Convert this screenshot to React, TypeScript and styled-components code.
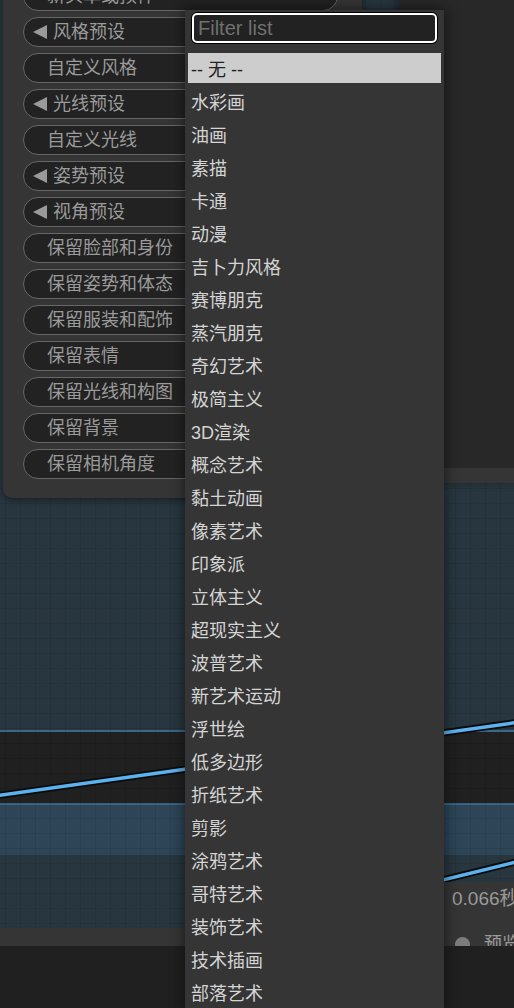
import React from 'react';
import styled, { createGlobalStyle } from 'styled-components';

const GlobalStyle = createGlobalStyle`
  body {
    margin: 0;
    background: #202020;
  }
`;

const pills = [
  { label: '新头单或预件', arrow: false },
  { label: '风格预设', arrow: true },
  { label: '自定义风格', arrow: false },
  { label: '光线预设', arrow: true },
  { label: '自定义光线', arrow: false },
  { label: '姿势预设', arrow: true },
  { label: '视角预设', arrow: true },
  { label: '保留脸部和身份', arrow: false },
  { label: '保留姿势和体态', arrow: false },
  { label: '保留服装和配饰', arrow: false },
  { label: '保留表情', arrow: false },
  { label: '保留光线和构图', arrow: false },
  { label: '保留背景', arrow: false },
  { label: '保留相机角度', arrow: false },
];

const options = [
  '-- 无 --', '水彩画', '油画', '素描', '卡通', '动漫', '吉卜力风格', '赛博朋克', '蒸汽朋克',
  '奇幻艺术', '极简主义', '3D渲染', '概念艺术', '黏土动画', '像素艺术', '印象派', '立体主义',
  '超现实主义', '波普艺术', '新艺术运动', '浮世绘', '低多边形', '折纸艺术', '剪影', '涂鸦艺术',
  '哥特艺术', '装饰艺术', '技术插画', '部落艺术',
];

const App: React.FC = () => (
  <Screen>
    <GlobalStyle />
    <Canvas>
      <GroupBand $top={730} $height={75} $bg='#202020' $edge='#3a678a' />
      <GroupBand $top={805} $height={50} $bg='#2d4557' />
      <GridOverlay />
      <Links width='514' height='928'>
        <line x1='-5' y1='796' x2='520' y2='722' stroke='#0b0b0b' strokeWidth='7' />
        <line x1='-5' y1='796' x2='520' y2='722' stroke='#5cb2ee' strokeWidth='3.5' />
        <line x1='300' y1='915' x2='520' y2='861' stroke='#0b0b0b' strokeWidth='7' />
        <line x1='300' y1='915' x2='520' y2='861' stroke='#5cb2ee' strokeWidth='3.5' />
      </Links>
      <PanelNode>
        {pills.map((p) => (
          <Pill key={p.label} $arrow={p.arrow}>
            {p.arrow && <Arrow />}
            {p.label}
          </Pill>
        ))}
      </PanelNode>
      <SideNode>
        <SideBody />
        <SideFooter />
      </SideNode>
    </Canvas>
    <StatusStrip />
    <BottomPanel />
    <ResultNode>
      <Timing>0.066秒</Timing>
      <PreviewRow>
        <Dot />
        预览
      </PreviewRow>
    </ResultNode>
    <Dropdown>
      <FilterInput placeholder='Filter list' />
      {options.map((o, i) => (
        <Option key={o} $selected={i === 0}>
          {o}
        </Option>
      ))}
    </Dropdown>
  </Screen>
);

const Screen = styled.div`
  position: relative;
  width: 514px;
  height: 1008px;
  overflow: hidden;
  display: flex;
  flex-direction: column;
  font-family: 'Liberation Sans', 'Noto Sans CJK SC', sans-serif;
`;

const Canvas = styled.div`
  position: relative;
  flex: 0 0 928px;
  background: #28363f;
  overflow: hidden;
`;

const GroupBand = styled.div<{ $top: number; $height: number; $bg: string; $edge?: string }>`
  position: absolute;
  left: 0;
  right: 0;
  top: ${(p) => p.$top}px;
  height: ${(p) => p.$height}px;
  box-sizing: border-box;
  background: ${(p) => p.$bg};
  border-top: ${(p) => (p.$edge ? `2px solid ${p.$edge}` : 'none')};
  border-bottom: ${(p) => (p.$edge ? `2px solid ${p.$edge}` : 'none')};
`;

const GridOverlay = styled.div`
  position: absolute;
  inset: 0;
  background-image: linear-gradient(rgba(0, 0, 0, 0.08) 1px, transparent 1px),
    linear-gradient(90deg, rgba(0, 0, 0, 0.08) 1px, transparent 1px);
  background-size: 15px 15px;
  background-position: 5px 8px;
`;

const Links = styled.svg`
  position: absolute;
  left: 0;
  top: 0;
`;

const PanelNode = styled.div`
  position: absolute;
  left: 3px;
  top: -30px;
  width: 359px;
  box-sizing: border-box;
  padding: 11px 0 19px 20px;
  display: flex;
  flex-direction: column;
  gap: 6px;
  background: #353535;
  border-radius: 0 0 9px 9px;
  box-shadow: 0 2px 6px rgba(0, 0, 0, 0.45);
`;

const Pill = styled.div<{ $arrow: boolean }>`
  display: flex;
  align-items: center;
  gap: 6px;
  width: 315px;
  height: 30px;
  box-sizing: border-box;
  padding-left: ${(p) => (p.$arrow ? '9px' : '23px')};
  background: #222;
  border: 1px solid #666;
  border-radius: 15px;
  color: #9a9a9a;
  font-size: 18px;
  line-height: 1;
  white-space: nowrap;
`;

const Arrow = styled.span`
  width: 0;
  height: 0;
  border-top: 7px solid transparent;
  border-bottom: 7px solid transparent;
  border-right: 14px solid #9a9a9a;
`;

const SideNode = styled.div`
  position: absolute;
  left: 400px;
  top: -10px;
  width: 130px;
  height: 493px;
  display: flex;
  flex-direction: column;
  box-shadow: -3px 0 8px rgba(0, 0, 0, 0.3);
`;

const SideBody = styled.div`
  flex: 1;
  background: #282828;
`;

const SideFooter = styled.div`
  flex: 0 0 15px;
  background: #353535;
`;

const StatusStrip = styled.div`
  flex: 0 0 18px;
  background: #353535;
`;

const BottomPanel = styled.div`
  position: relative;
  z-index: 3;
  flex: 1;
  background: #202020;
`;

const ResultNode = styled.div`
  position: absolute;
  z-index: 2;
  left: 440px;
  top: 882px;
  width: 90px;
  height: 64px;
  overflow: hidden;
  box-sizing: border-box;
  padding: 5px 0 0 12px;
  background: #353535;
  color: #9a9a9a;
`;

const Timing = styled.div`
  font-size: 19px;
  line-height: 24px;
`;

const PreviewRow = styled.div`
  display: flex;
  align-items: center;
  gap: 14px;
  margin-top: 23px;
  padding-left: 3px;
  font-size: 18px;
  line-height: 20px;
`;

const Dot = styled.span`
  width: 15px;
  height: 15px;
  border-radius: 50%;
  background: #7d7d7d;
`;

const Dropdown = styled.div`
  position: absolute;
  z-index: 10;
  left: 185px;
  top: 10px;
  width: 259px;
  box-sizing: border-box;
  padding: 3px;
  display: flex;
  flex-direction: column;
  gap: 3px;
  background: #353535;
  box-shadow: 0 0 12px 2px rgba(0, 0, 0, 0.45);
`;

const FilterInput = styled.input`
  margin: 0 4px 7px;
  height: 30px;
  box-sizing: border-box;
  padding: 0 4px;
  background: #222;
  border: 2px solid #fff;
  border-radius: 5px;
  box-shadow: 0 0 0 1px #000;
  outline: none;
  font-family: 'Liberation Sans', sans-serif;
  font-size: 20px;
  color: #ddd;
  &::placeholder {
    color: #707070;
  }
`;

const Option = styled.div<{ $selected: boolean }>`
  height: 30px;
  padding-left: 3px;
  display: flex;
  align-items: center;
  font-size: 18px;
  white-space: nowrap;
  background: ${(p) => (p.$selected ? '#cdcdcd' : 'transparent')};
  color: ${(p) => (p.$selected ? '#222' : '#d4d4d4')};
`;

export default App;
